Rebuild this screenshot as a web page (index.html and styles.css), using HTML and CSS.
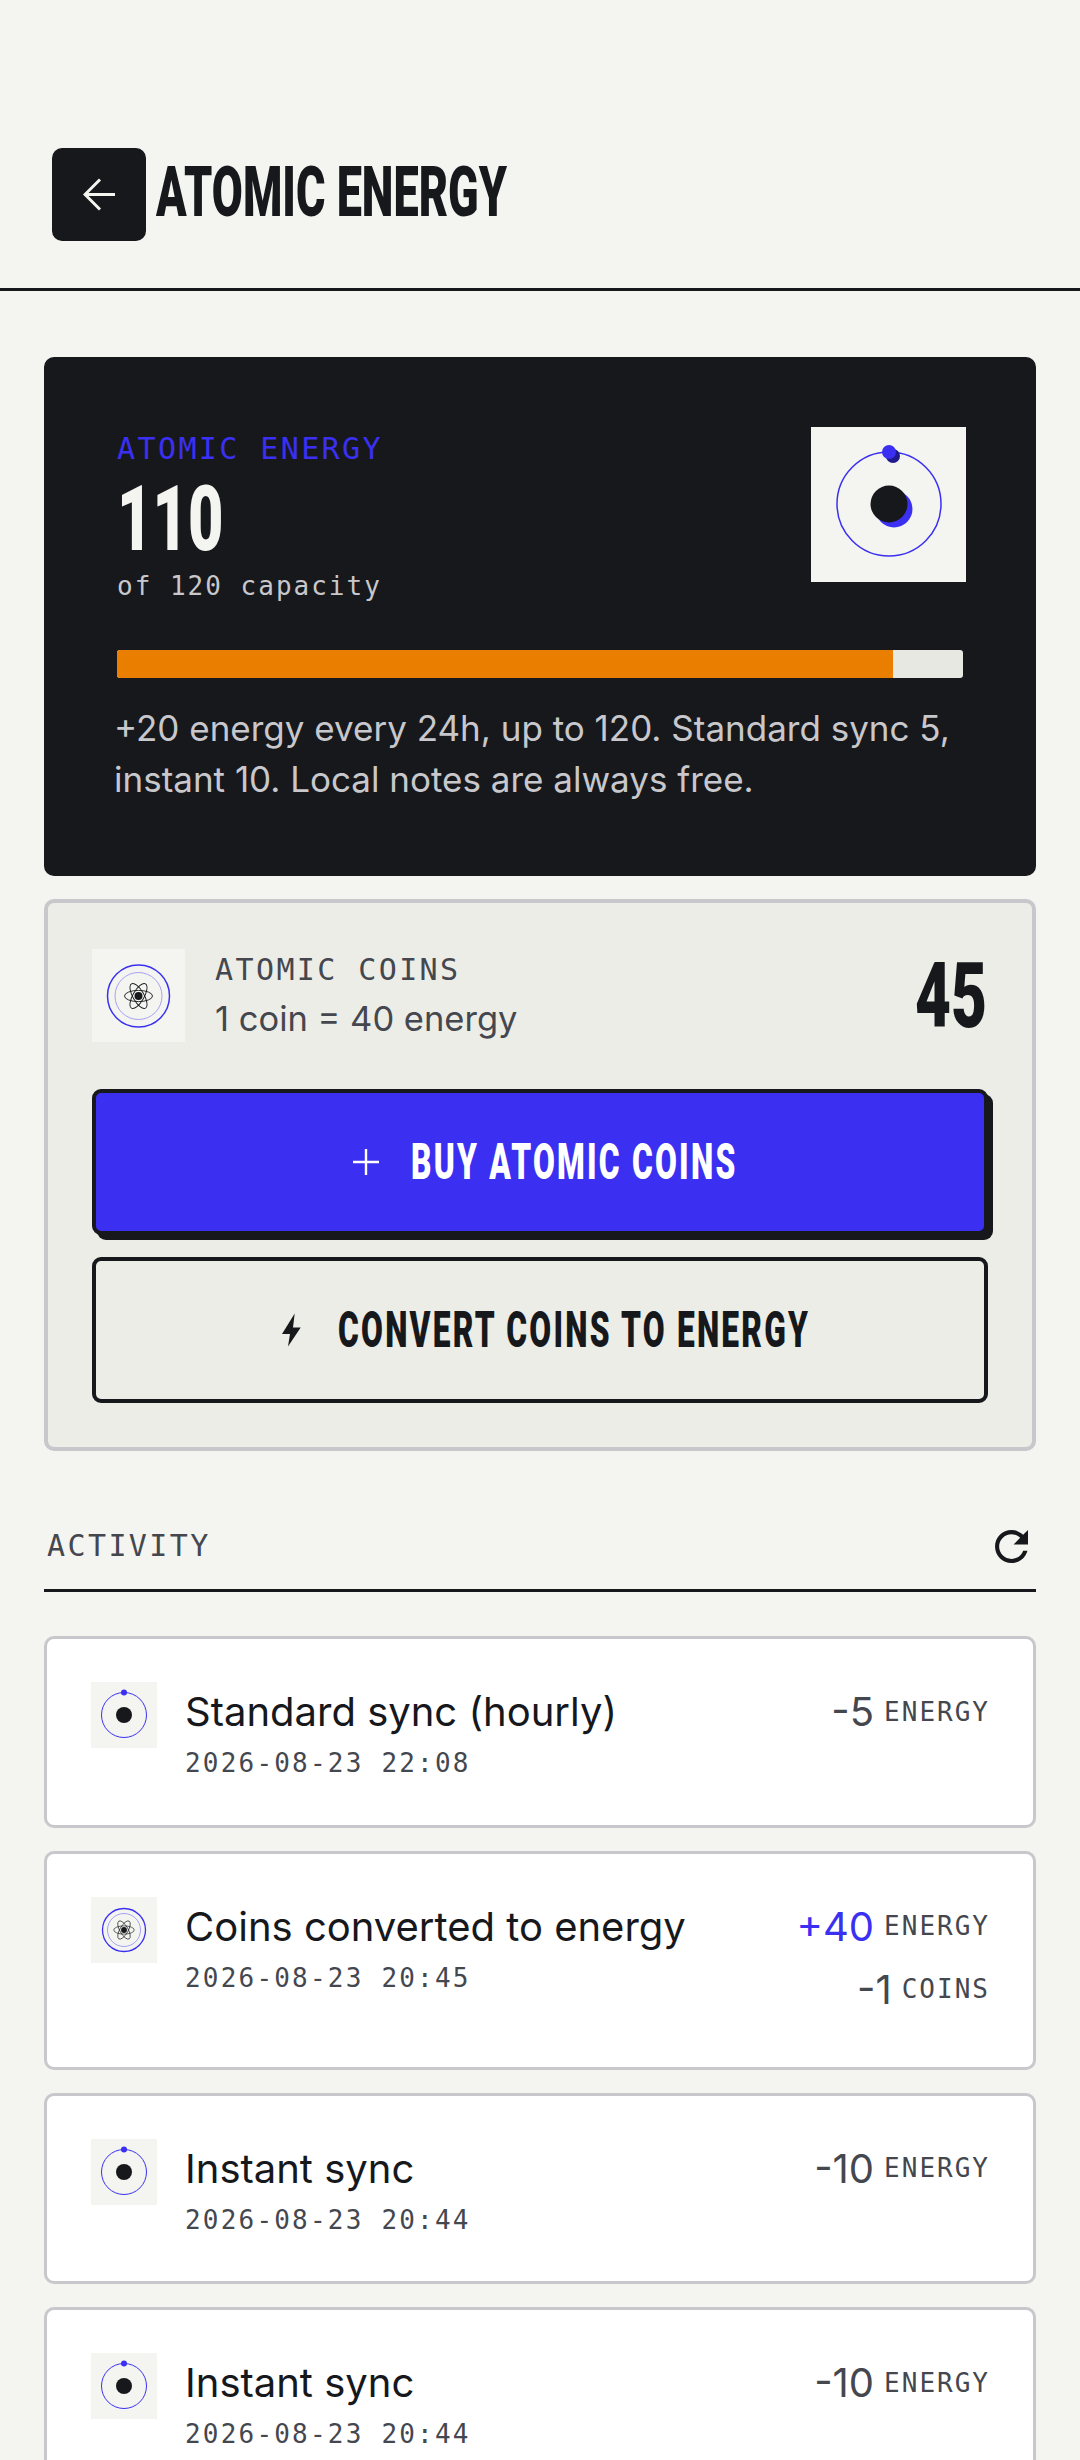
FILE: index.html
```html
<!DOCTYPE html>
<html lang="en">
<head>
    <meta charset="UTF-8">
    <meta name="viewport" content="width=device-width, initial-scale=1.0">
    <title>Atomic Energy</title>
    <link rel="stylesheet" href="styles.css">
</head>
<body>

    <svg class="sprites" width="0" height="0">
        <symbol id="orbit-small" viewBox="0 0 66 66">
            <circle cx="33" cy="33" r="22.5" fill="none" stroke="#3b30f2" stroke-width="1"/>
            <circle cx="33" cy="33" r="8" fill="#16181c"/>
            <circle cx="33" cy="10.5" r="3" fill="#3b30f2"/>
        </symbol>
        <symbol id="atom" viewBox="-15 -15 30 30">
            <g fill="none" stroke="#16181c" stroke-width="0.9">
                <ellipse rx="14" ry="5.6"/>
                <ellipse rx="14" ry="5.6" transform="rotate(60)"/>
                <ellipse rx="14" ry="5.6" transform="rotate(120)"/>
            </g>
            <circle r="4" fill="#16181c"/>
        </symbol>
    </svg>

    <div class="screen">
        <header class="topbar">
            <button class="back-btn">
                <svg width="33" height="33" viewBox="0 0 33 33" fill="none" stroke="#f4f5f0" stroke-width="3">
                    <path d="M32 16.500H2M17 1.500L2 16.500L17 31.500"/>
                </svg>
            </button>
            <h1 class="page-title"><span>ATOMIC ENERGY</span></h1>
        </header>

        <main class="content">
            <section class="energy-card">
                <div class="energy-top">
                    <div class="energy-info">
                        <div class="mono-label energy-label">ATOMIC ENERGY</div>
                        <div class="big-number energy-value"><span>110</span></div>
                        <div class="mono-small energy-cap">of 120 capacity</div>
                    </div>
                    <div class="energy-art">
                        <svg width="155" height="155" viewBox="0 0 155 155">
                            <circle cx="78" cy="77" r="52" fill="none" stroke="#3b30f2" stroke-width="1.5"/>
                            <circle cx="83" cy="82" r="18.5" fill="#3b30f2"/>
                            <circle cx="78" cy="77" r="18.5" fill="#16181c"/>
                            <circle cx="82" cy="29" r="7" fill="#1f1a8c"/>
                            <circle cx="78" cy="25" r="7" fill="#3b30f2"/>
                        </svg>
                    </div>
                </div>
                <div class="energy-bar"><div class="energy-fill" style="width: 91.67%"></div></div>
                <p class="energy-note">+20 energy every 24h, up to 120. Standard sync 5, instant 10. Local notes are always free.</p>
            </section>

            <section class="coins-card">
                <div class="coins-top">
                    <div class="coins-icon">
                        <svg width="93" height="93" viewBox="0 0 93 93">
                            <circle cx="46.5" cy="47" r="31" fill="none" stroke="#3b30f2" stroke-width="1.5"/>
                            <circle cx="46.5" cy="47" r="23.5" fill="none" stroke="#a5a1f5" stroke-width="1"/>
                            <use href="#atom" x="31.5" y="32" width="30" height="30"/>
                        </svg>
                    </div>
                    <div class="coins-text">
                        <div class="mono-label">ATOMIC COINS</div>
                        <div class="coins-rate">1 coin = 40 energy</div>
                    </div>
                    <div class="big-number coins-value"><span>45</span></div>
                </div>
                <button class="action-btn buy-btn">
                    <svg width="26" height="26" viewBox="0 0 26 26" stroke="#fff" stroke-width="2.4"><path d="M13 0V26M0 13H26"/></svg>
                    <span>BUY ATOMIC COINS</span>
                </button>
                <button class="action-btn convert-btn">
                    <svg width="19" height="34" viewBox="0 0 19 34" fill="#16181c"><path d="M12.700 0.500L0 21H8L6 33.500L18.700 14.500H11Z"/></svg>
                    <span>CONVERT COINS TO ENERGY</span>
                </button>
            </section>

            <section class="activity">
                <div class="activity-head">
                    <div class="mono-label">ACTIVITY</div>
                    <svg width="33" height="33" viewBox="4 4 16 16" class="refresh">
                        <path fill="#16181c" d="M17.650 6.350C16.200 4.900 14.210 4 12 4c-4.420 0-7.990 3.580-7.990 8s3.570 8 7.990 8c3.730 0 6.840-2.550 7.730-6h-2.080c-.82 2.330-3.040 4-5.650 4-3.310 0-6-2.690-6-6s2.690-6 6-6c1.660 0 3.140.69 4.220 1.780L13 11h7V4l-2.350 2.350z"/>
                    </svg>
                </div>

                <div class="activity-item">
                    <svg class="item-icon" width="66" height="66"><use href="#orbit-small"/></svg>
                    <div class="item-main">
                        <div class="item-title">Standard sync (hourly)</div>
                        <div class="mono-small item-date">2026-08-23 22:08</div>
                    </div>
                    <div class="item-amounts">
                        <div class="amount"><span class="amount-num">-5</span><span class="mono-small">ENERGY</span></div>
                    </div>
                </div>

                <div class="activity-item">
                    <svg class="item-icon" width="66" height="66" viewBox="0 0 66 66">
                        <circle cx="33" cy="33" r="21.500" fill="none" stroke="#3b30f2" stroke-width="1.300"/>
                        <circle cx="33" cy="33" r="16.500" fill="none" stroke="#a5a1f5" stroke-width="1"/>
                        <use href="#atom" x="22" y="22" width="22" height="22"/>
                    </svg>
                    <div class="item-main">
                        <div class="item-title">Coins converted to energy</div>
                        <div class="mono-small item-date">2026-08-23 20:45</div>
                    </div>
                    <div class="item-amounts two-rows">
                        <div class="amount"><span class="amount-num plus">+40</span><span class="mono-small">ENERGY</span></div>
                        <div class="amount"><span class="amount-num">-1</span><span class="mono-small">COINS</span></div>
                    </div>
                </div>

                <div class="activity-item">
                    <svg class="item-icon" width="66" height="66"><use href="#orbit-small"/></svg>
                    <div class="item-main">
                        <div class="item-title">Instant sync</div>
                        <div class="mono-small item-date">2026-08-23 20:44</div>
                    </div>
                    <div class="item-amounts">
                        <div class="amount"><span class="amount-num">-10</span><span class="mono-small">ENERGY</span></div>
                    </div>
                </div>

                <div class="activity-item">
                    <svg class="item-icon" width="66" height="66"><use href="#orbit-small"/></svg>
                    <div class="item-main">
                        <div class="item-title">Instant sync</div>
                        <div class="mono-small item-date">2026-08-23 20:44</div>
                    </div>
                    <div class="item-amounts">
                        <div class="amount"><span class="amount-num">-10</span><span class="mono-small">ENERGY</span></div>
                    </div>
                </div>
            </section>
        </main>
    </div>

</body>
</html>
```

FILE: styles.css
```css
* {
    box-sizing: border-box;
}

html, body {
    margin: 0;
    background-color: #f4f5f0;
}

body {
    font-family: "Inter", Arial, sans-serif;
    color: #16181c;
}

.sprites {
    position: absolute;
}

.screen {
    width: 1080px;
    height: 2460px;
    overflow: hidden;
}

.topbar {
    display: flex;
    align-items: center;
    gap: 10px;
    height: 291px;
    padding: 148px 52px 47px;
    border-bottom: 3px solid #16181c;
}

.back-btn {
    display: flex;
    align-items: center;
    justify-content: center;
    flex: none;
    width: 94px;
    height: 93px;
    padding: 0;
    background-color: #16181c;
    border: none;
    border-radius: 10px;
}

/* no condensed display face on hand, so a heavy sans gets squeezed */
.page-title span,
.big-number span,
.action-btn span {
    display: inline-block;
    font-family: "Roboto", "Liberation Sans", sans-serif;
    font-weight: 900;
    white-space: nowrap;
    transform-origin: left center;
}

.page-title {
    width: 351px;
    margin: 0 0 6px;
    font-size: 70px;
    line-height: 1;
}

.page-title span {
    transform: scaleX(0.643);
}

.content {
    padding: 66px 44px 0;
}

.mono-label,
.mono-small {
    font-family: "DejaVu Sans Mono", monospace;
}

.mono-label {
    font-size: 30px;
    line-height: 34px;
    letter-spacing: 2.4px;
    color: #45474f;
}

.mono-small {
    font-size: 26px;
    line-height: 32px;
    letter-spacing: 2px;
    color: #45474f;
}

.energy-card {
    height: 519px;
    padding: 70px 73px 0;
    background-color: #16181c;
    border-radius: 10px;
}

.energy-top {
    display: flex;
    justify-content: space-between;
}

.energy-info {
    padding-top: 5px;
}

.energy-label {
    color: #3b30f2;
}

.big-number {
    font-size: 90px;
    line-height: 88px;
}

.energy-value {
    margin-top: 8px;
    color: #f4f5f0;
}

.energy-value span {
    transform: scaleX(0.68);
    width: 101px;
}

.energy-cap {
    margin-top: 6px;
    color: #c8c8cc;
}

.energy-art {
    width: 155px;
    height: 155px;
    margin-right: -3px;
    background-color: #f4f5f0;
}

.energy-art svg {
    display: block;
}

.energy-bar {
    width: 846px;
    height: 28px;
    margin-top: 48px;
    background-color: #e8e8e2;
    border-radius: 3px;
    overflow: hidden;
}

.energy-fill {
    height: 100%;
    background-color: #ea7e00;
}

.energy-note {
    margin: 25px -10px 0 -3px;
    font-size: 35px;
    line-height: 51px;
    color: #c8c8cc;
}

.coins-card {
    margin-top: 23px;
    height: 552px;
    padding: 46px 44px 0;
    background-color: #ecede7;
    border: 4px solid #c8c8cc;
    border-radius: 10px;
}

.coins-top {
    display: flex;
    align-items: center;
    gap: 30px;
}

.coins-icon {
    flex: none;
    width: 93px;
    height: 93px;
    background-color: #f4f5f0;
}

.coins-icon svg {
    display: block;
}

.coins-text {
    flex: 1;
    padding-top: 3px;
}

.coins-rate {
    margin-top: 10px;
    font-size: 34.5px;
    line-height: 44px;
    color: #45474f;
}

.coins-value {
    width: 68px;
    margin-right: 5px;
    color: #16181c;
}

.coins-value span {
    transform: scaleX(0.69);
    width: 68px;
}

.action-btn {
    display: flex;
    align-items: center;
    justify-content: center;
    width: 896px;
    border: 4px solid #16181c;
    border-radius: 9px;
}

.action-btn span {
    font-size: 50px;
    letter-spacing: 3.5px;
    transform: scaleX(0.634);
}

.buy-btn {
    gap: 32px;
    height: 146px;
    margin-top: 47px;
    padding-left: 14px;
    background-color: #3b30f2;
    color: #fff;
    box-shadow: 5px 5px 0 #16181c;
}

.buy-btn span {
    width: 324px;
}

.convert-btn {
    gap: 37px;
    height: 146px;
    margin-top: 22px;
    padding-left: 18px;
    background-color: transparent;
    color: #16181c;
}

.convert-btn span {
    width: 472px;
}

.activity {
    margin-top: 68px;
}

.activity-head {
    display: flex;
    align-items: center;
    justify-content: space-between;
    height: 73px;
    padding: 0 8px 16px 3px;
    border-bottom: 3px solid #16181c;
}

.activity-item {
    display: flex;
    align-items: flex-start;
    gap: 28px;
    min-height: 191.5px;
    margin-top: 23px;
    padding: 43px 43px 45px 44px;
    background-color: #fff;
    border: 3px solid #c8c8cc;
    border-radius: 10px;
}

.activity-head + .activity-item {
    margin-top: 44px;
}

.item-icon {
    flex: none;
    background-color: #f4f5f0;
}

.item-main {
    flex: 1;
}

.item-title {
    margin-top: 7px;
    font-size: 40px;
    line-height: 46px;
}

.item-date {
    margin-top: 12px;
    letter-spacing: 2.2px;
}

.item-amounts {
    display: flex;
    flex-direction: column;
    align-items: flex-end;
    gap: 16px;
    padding-top: 6px;
}

.item-amounts.two-rows {
    margin-bottom: 9px;
}

.amount {
    display: flex;
    align-items: center;
    gap: 10px;
    height: 47px;
}

.amount-num {
    font-size: 40px;
    color: #45474f;
}

.amount-num.plus {
    color: #3b30f2;
}
```
